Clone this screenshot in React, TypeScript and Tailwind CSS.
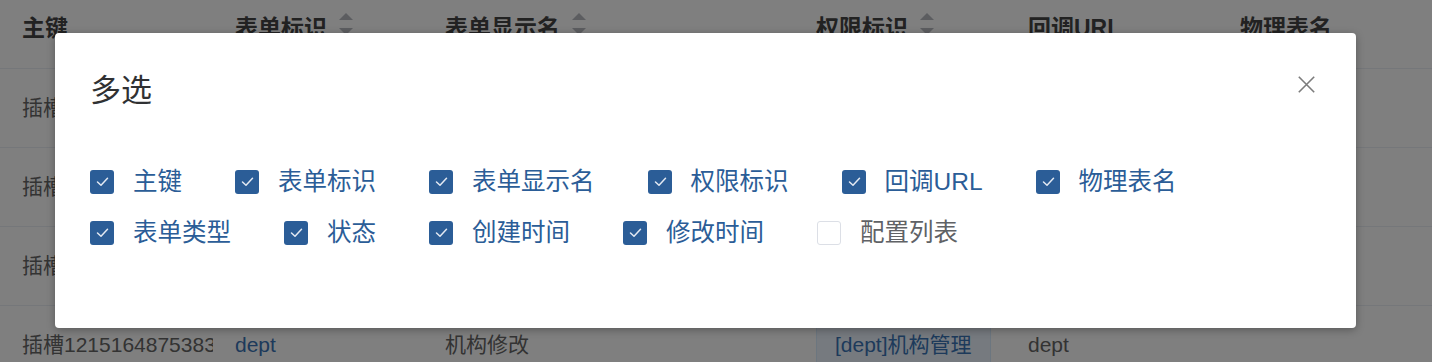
import React from "react";

const FONT = '"Liberation Sans", "Noto Sans CJK SC", sans-serif';

function Caret() {
  return (
    <div className="ml-[12px] mt-[1px] flex flex-col items-center gap-[8px]">
      <svg width="14" height="7" viewBox="0 0 14 7" className="block">
        <polygon points="7,0 14,7 0,7" fill="#b8bbc1" />
      </svg>
      <svg width="14" height="7" viewBox="0 0 14 7" className="block">
        <polygon points="0,0 14,0 7,7" fill="#b8bbc1" />
      </svg>
    </div>
  );
}

const cols = ["w-[213px]", "w-[210px]", "w-[371px]", "w-[212px]", "w-[212px]", "w-[214px]"];

const header: { t: string; sort?: boolean }[] = [
  { t: "主键" },
  { t: "表单标识", sort: true },
  { t: "表单显示名", sort: true },
  { t: "权限标识", sort: true },
  { t: "回调URL" },
  { t: "物理表名" },
];

const rows = [
  ["插槽1215164875383", "slot", "插槽管理", "[slot]插槽管理", "slot", ""],
  ["插槽1215164875383", "user", "用户修改", "[user]用户管理", "user", ""],
  ["插槽1215164875383", "role", "角色修改", "[role]角色管理", "role", ""],
  ["插槽1215164875383", "dept", "机构修改", "[dept]机构管理", "dept", ""],
];

function Table() {
  return (
    <div className="w-full bg-white" style={{ fontFamily: FONT }}>
      <div className="flex h-[69px] border-b border-[#ebeef5] bg-white">
        {header.map((h, i) => (
          <div key={i} className={`${cols[i]} shrink-0 pl-[22px] pt-[12px]`}>
            <div className="flex items-start">
              <span className="text-[23px] font-bold leading-[32px] text-[#454545] whitespace-nowrap">{h.t}</span>
              {h.sort && <Caret />}
            </div>
          </div>
        ))}
      </div>
      {rows.map((r, ri) => (
        <div key={ri} className="flex h-[79px] items-center border-b border-[#ebeef5]">
          {r.map((c, ci) => (
            <div key={ci} className={`${cols[ci]} shrink-0 pl-[22px]`}>
              {ci === 0 ? (
                <div className="w-[191px] overflow-hidden whitespace-nowrap text-[21px] text-[#666]">{c}</div>
              ) : ci === 1 ? (
                <span className="text-[21px] text-[#3b74b6]">{c}</span>
              ) : ci === 3 ? (
                <span className="inline-flex h-[56px] items-center rounded-[4px] border border-[#d9ecff] bg-[#ecf5ff] px-[18px] text-[21px] text-[#3b74b6] whitespace-nowrap">
                  {c}
                </span>
              ) : (
                <span className="text-[21px] text-[#666] whitespace-nowrap">{c}</span>
              )}
            </div>
          ))}
        </div>
      ))}
    </div>
  );
}

const items: { label: string; checked: boolean }[] = [
  { label: "主键", checked: true },
  { label: "表单标识", checked: true },
  { label: "表单显示名", checked: true },
  { label: "权限标识", checked: true },
  { label: "回调URL", checked: true },
  { label: "物理表名", checked: true },
  { label: "表单类型", checked: true },
  { label: "状态", checked: true },
  { label: "创建时间", checked: true },
  { label: "修改时间", checked: true },
  { label: "配置列表", checked: false },
];

function Check({ checked }: { checked: boolean }) {
  return checked ? (
    <span className="flex h-[24px] w-[24px] shrink-0 items-center justify-center rounded-[3px] bg-[#2b5d97]">
      <svg width="24" height="24" viewBox="0 0 24 24">
        <polyline points="7.5,12 11,15.3 17.5,8.3" fill="none" stroke="#e3e9f2" strokeWidth="1.5" strokeLinecap="round" strokeLinejoin="round" />
      </svg>
    </span>
  ) : (
    <span className="h-[24px] w-[24px] shrink-0 rounded-[3px] border border-[#dcdfe6] bg-white" />
  );
}

function Modal() {
  return (
    <div
      className="absolute left-[55px] top-[33px] h-[295px] w-[1301px] rounded-[4px] bg-white shadow-[0_2px_8px_rgba(0,0,0,0.3)]"
      style={{ fontFamily: FONT }}
    >
      <div className="flex items-start justify-between pl-[35px] pr-[41px]">
        <div className="mt-[42px] text-[31px] leading-[32px] text-[#303133]">多选</div>
        <button className="mt-[43px] flex h-[17px] w-[17px] items-center justify-center">
          <svg width="17" height="17" viewBox="0 0 17 17">
            <path d="M0.8 0.8 L16.2 16.2 M16.2 0.8 L0.8 16.2" stroke="#7c7c7c" strokeWidth="1.6" />
          </svg>
        </button>
      </div>
      <div className="mt-[49px] flex w-[1240px] flex-wrap pl-[35px]">
        {items.map((it, i) => (
          <label key={i} className="mr-[53px] flex h-[51px] items-center pt-[1px]">
            <Check checked={it.checked} />
            <span
              className={`ml-[19px] whitespace-nowrap text-[24.5px] leading-none ${
                it.checked ? "text-[#2b5d97]" : "text-[#606266]"
              }`}
            >
              {it.label}
            </span>
          </label>
        ))}
      </div>
    </div>
  );
}

export default function App() {
  return (
    <div className="relative h-[362px] w-[1432px] overflow-hidden bg-white">
      <Table />
      <div className="absolute inset-0 bg-black/50" />
      <Modal />
    </div>
  );
}
